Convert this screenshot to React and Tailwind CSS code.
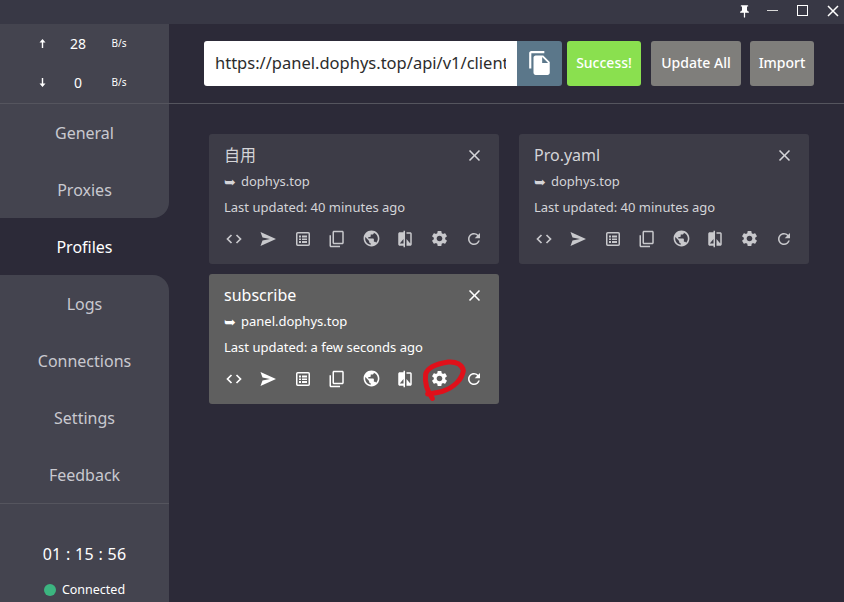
import React from 'react';
import { MdPushPin, MdFileCopy, MdOutlineContentCopy, MdPublic, MdCompare, MdSettings, MdRefresh, MdClose } from 'react-icons/md';

const font = 'font-["Noto_Sans","Noto_Sans_CJK_SC",sans-serif]';

const navItems = ['General', 'Proxies', 'Profiles', 'Logs', 'Connections', 'Settings', 'Feedback'];

const profiles = [
    { name: '自用', host: 'dophys.top', updated: '40 minutes ago' },
    { name: 'Pro.yaml', host: 'dophys.top', updated: '40 minutes ago' },
    { name: 'subscribe', host: 'panel.dophys.top', updated: 'a few seconds ago', active: true },
];

const ArrowIcon = ({ down }) => (
    <svg width="7" height="9" viewBox="0 0 7 9" fill="white" className={`mx-auto ${down ? 'rotate-180' : ''}`}>
        <path d="M3.5 0 6.5 3.5H4.2V9H2.8V3.5H0.5z" />
    </svg>
);

const CodeIcon = () => (
    <svg width="16" height="12" viewBox="0 0 16 12" fill="none" stroke="currentColor" strokeWidth="1.7">
        <path d="M5.5 2 1.5 6l4 4M10.5 2l4 4-4 4" />
    </svg>
);

const SendIcon = () => (
    <svg width="16" height="14" viewBox="0 0 16 14" fill="currentColor">
        <path d="M0.5 0 16 7 0.5 14 2.5 8.6 10 7 2.5 5.4z" />
    </svg>
);

const TableIcon = () => (
    <svg width="14" height="14" viewBox="0 0 14 14" fill="none">
        <rect x="0.75" y="0.75" width="12.5" height="12.5" rx="1" stroke="currentColor" strokeWidth="1.5" />
        <path d="M3 3.5h2v2H3zM6 3.5h5v2H6zM3 6.5h2v1.5H3zM6 6.5h5v1.5H6zM3 9h2v2H3zM6 9h5v2H6z" fill="currentColor" />
    </svg>
);

const ProfileCard = ({ name, host, updated, active }) => (
    <div className={`relative h-[130px] rounded-[3px] px-[15px] pt-[9px] ${active ? 'bg-[#5f5f5f] text-white' : 'bg-[#3d3c47] text-[#d4d4d8]'}`}>
        <div className="flex h-6 items-center justify-between">
            <span className="text-[16px] leading-6">{name}</span>
            <MdClose size={19} />
        </div>
        <div className="mt-[5px] flex h-[20px] items-center text-[13px]">
            <span className='mr-[5px] w-[12px] font-["DejaVu_Sans"] text-[14px] leading-5'>➥</span>
            <span>{host}</span>
        </div>
        <div className="mt-[5px] h-5 text-[13px] leading-5">Last updated: {updated}</div>
        <div className={`mt-[12px] flex items-center justify-between ${active ? 'text-white' : 'text-[#c8c8cc]'}`}>
            <span className="flex w-5 justify-center"><CodeIcon /></span>
            <span className="flex w-5 justify-center"><SendIcon /></span>
            <span className="flex w-5 justify-center"><TableIcon /></span>
            <span className="flex w-5 justify-center"><MdOutlineContentCopy size={18} className="scale-x-[-1] rotate-180" /></span>
            <span className="flex w-5 justify-center"><MdPublic size={19} /></span>
            <span className="flex w-5 justify-center"><MdCompare size={18} /></span>
            <span className="flex w-5 justify-center"><MdSettings size={19} /></span>
            <span className="flex w-5 justify-center"><MdRefresh size={18} /></span>
        </div>
        {active && (
            <svg className="absolute left-[-4px] top-[-4px] h-[140px] w-[300px]" viewBox="0 0 900 420" fill="none">
                <path
                    d="M682 385C668 365 658 340 662 312C668 292 690 282 730 276C755 274 772 285 775 302C772 325 750 352 712 364C695 369 680 370 668 372"
                    stroke="#e0101a"
                    strokeWidth="15"
                    strokeLinecap="round"
                />
            </svg>
        )}
    </div>
);

export default function App() {
    return (
        <div className={`flex h-screen w-full flex-col overflow-hidden bg-[#2c2a38] ${font}`}>
            <div className="flex h-6 shrink-0 items-center justify-end bg-[#383845] pb-[3px] text-white">
                <MdPushPin size={15} className="mr-[15px] mt-[1px]" />
                <span className="mr-[19px] h-[1.5px] w-[11px] bg-[#d8d8d8]" />
                <span className="mr-[19px] h-[11px] w-[11px] border-[1.5px] border-white" />
                <svg width="12" height="12" viewBox="0 0 12 12" stroke="white" strokeWidth="1.5" className="mr-[5px]">
                    <path d="M1 1l10 10M11 1 1 11" />
                </svg>
            </div>
            <div className="flex min-h-0 flex-1">
                <aside className="flex w-[169px] shrink-0 flex-col bg-[#2c2a38] text-[#c9c9cf]">
                    <div className="h-[80px] shrink-0 border-b border-[#55555e] bg-[#44444f] text-white">
                        <div className="grid h-[39px] grid-cols-[34px_38px_44px] items-center pl-[25px] text-center">
                            <ArrowIcon />
                            <span className="text-[14px]">28</span>
                            <span className="text-[10px]">B/s</span>
                        </div>
                        <div className="grid h-[39px] grid-cols-[34px_38px_44px] items-center pl-[25px] text-center">
                            <ArrowIcon down />
                            <span className="text-[14px]">0</span>
                            <span className="text-[10px]">B/s</span>
                        </div>
                    </div>
                    <nav className="flex shrink-0 flex-col">
                        {navItems.map((item) => (
                            <div
                                key={item}
                                className={`flex h-[57px] items-center justify-center text-[16px] ${item === 'Profiles' ? 'text-white' : 'bg-[#44444f]'} ${item === 'Proxies' ? 'rounded-br-[16px]' : ''} ${item === 'Logs' ? 'rounded-tr-[16px]' : ''}`}
                            >
                                {item}
                            </div>
                        ))}
                    </nav>
                    <div className="flex flex-1 flex-col items-center border-t border-[#55555e] bg-[#44444f] text-white">
                        <div className="mt-[40px] text-[16px] leading-5 tracking-[0.3px]">01 : 15 : 56</div>
                        <div className="mt-[16px] flex items-center text-[12.5px] leading-5">
                            <span className="mr-[6px] h-3 w-3 rounded-full bg-[#3cb580]" />
                            Connected
                        </div>
                    </div>
                </aside>
                <main className="min-w-0 flex-1">
                    <div className="flex h-[80px] items-center border-b border-[#55555e] pb-[1px] pl-[35px]">
                        <input
                            readOnly
                            value="https://panel.dophys.top/api/v1/client/subscribe"
                            className="h-[45px] w-[313px] rounded-l-[3px] bg-white px-[11px] pb-[2px] text-[16.5px] text-[#2c2c2c] outline-none"
                        />
                        <div className="flex h-[45px] w-[45px] items-center justify-center rounded-r-[3px] bg-[#5b778a] text-white">
                            <MdFileCopy size={26} />
                        </div>
                        <div className="ml-[5px] flex h-[45px] w-[74px] items-center justify-center rounded-[3px] bg-[#8ae04f] pb-[2px] text-[14px] font-medium text-white">Success!</div>
                        <div className="ml-[10px] flex h-[45px] w-[90px] items-center justify-center rounded-[3px] bg-[#7f7e7b] pb-[2px] text-[14px] font-medium text-white">Update All</div>
                        <div className="ml-[9px] flex h-[45px] w-[64px] items-center justify-center rounded-[3px] bg-[#7f7e7b] pb-[2px] text-[14px] font-medium text-white">Import</div>
                    </div>
                    <div className="grid grid-cols-[290px_290px] gap-x-5 gap-y-[10px] pl-[40px] pt-[30px]">
                        {profiles.map((profile) => (
                            <ProfileCard key={profile.name} {...profile} />
                        ))}
                    </div>
                </main>
            </div>
        </div>
    );
}
